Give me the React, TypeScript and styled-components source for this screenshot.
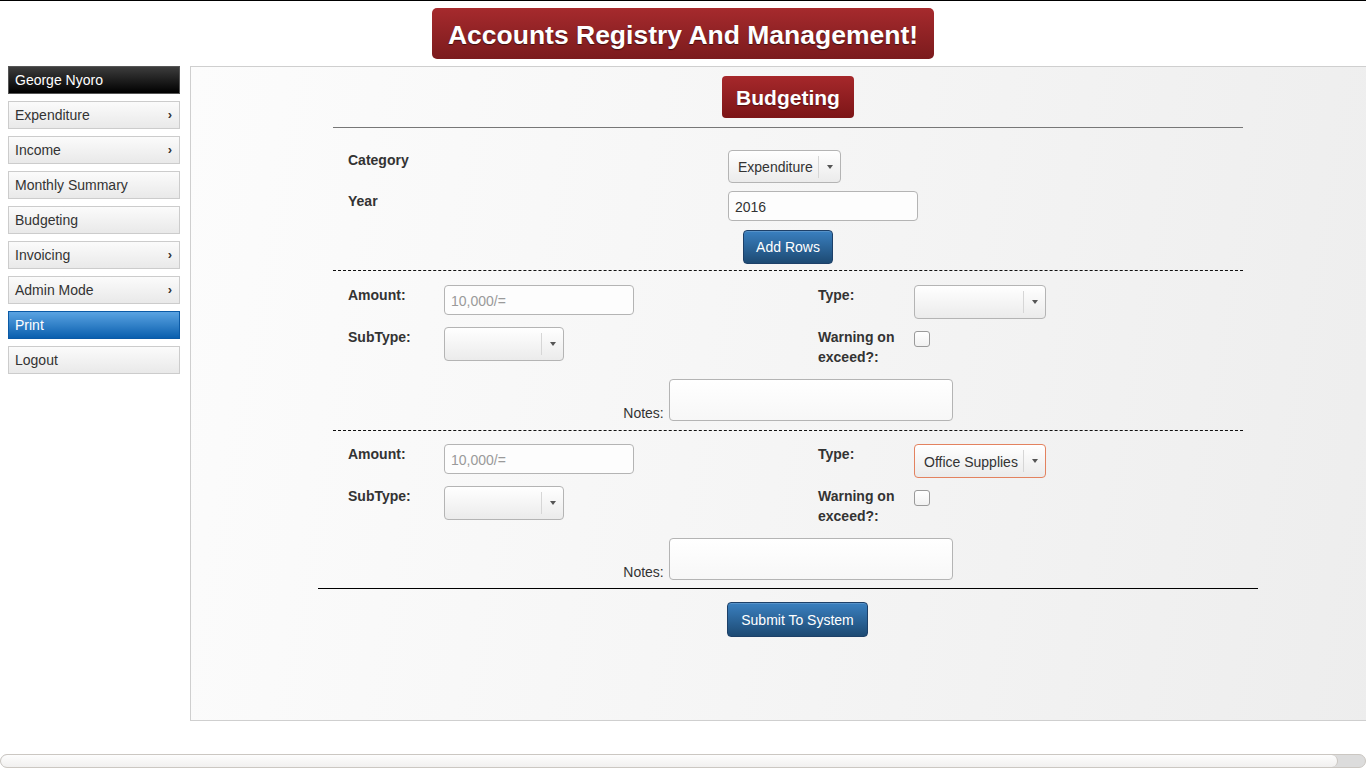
import React from "react";
import styled, { createGlobalStyle } from "styled-components";

const GlobalStyle = createGlobalStyle`
  html, body {
    margin: 0;
    padding: 0;
    overflow: hidden;
    background: #fff;
  }
  body {
    font-family: "Liberation Sans", Arial, sans-serif;
    font-size: 14px;
    color: #333;
  }
  * { box-sizing: border-box; }
`;

const Page = styled.div`
  height: 100vh;
  width: 100%;
  display: flex;
  flex-direction: column;
  border-top: 1px solid #000;
  overflow: hidden;
`;

const Header = styled.header`
  display: flex;
  justify-content: center;
  padding-top: 7px;
`;

const Title = styled.h1`
  margin: 0;
  width: 502px;
  height: 51px;
  padding-top: 3px;
  display: flex;
  align-items: center;
  justify-content: center;
  border-radius: 5px;
  background: linear-gradient(to bottom, #a62a2d 0%, #7b1b1d 100%);
  color: #fff;
  font-size: 26.5px;
  font-weight: bold;
  white-space: nowrap;
  text-shadow: 0 1px 1px rgba(0, 0, 0, 0.55);
`;

const Body = styled.div`
  display: flex;
  align-items: flex-start;
  gap: 10px;
  padding: 7px 0 0 8px;
`;

const Sidebar = styled.nav`
  width: 172px;
  flex-shrink: 0;
  display: flex;
  flex-direction: column;
  gap: 7px;
`;

const NavItem = styled.div<{ $variant?: "dark" | "active" }>`
  height: 28px;
  line-height: 26px;
  padding: 0 7px 0 6px;
  display: flex;
  justify-content: space-between;
  border: 1px solid
    ${(p) => (p.$variant === "active" ? "#0b5aa6" : p.$variant === "dark" ? "#555" : "#cccccc")};
  background: ${(p) =>
    p.$variant === "dark"
      ? "linear-gradient(to bottom, #3c3c3c 0%, #000 100%)"
      : p.$variant === "active"
      ? "linear-gradient(to bottom, #5aa3e2 0%, #0a5fae 100%)"
      : "linear-gradient(to bottom, #fbfbfb 0%, #e9e9e9 100%)"};
  color: ${(p) => (p.$variant ? "#fff" : "#333")};
  font-size: 14px;
  white-space: nowrap;
`;

const Chevron = styled.span`
  font-size: 13px;
  font-weight: bold;
  color: #333;
`;

const Panel = styled.main`
  width: 1196px;
  height: 655px;
  flex-shrink: 0;
  border: 1px solid #cfcfcf;
  background: linear-gradient(100deg, #fcfcfc 0%, #f5f5f5 50%, #ededed 100%);
  padding-top: 9px;
  display: flex;
  flex-direction: column;
  align-items: center;
`;

const Badge = styled.h2`
  margin: 0;
  width: 132px;
  height: 42px;
  padding-top: 2px;
  display: flex;
  align-items: center;
  justify-content: center;
  border-radius: 4px;
  background: linear-gradient(to bottom, #a6282b 0%, #7c1517 100%);
  color: #fff;
  font-size: 21px;
  font-weight: bold;
  text-shadow: 0 1px 1px rgba(0, 0, 0, 0.4);
`;

const Form = styled.form`
  width: 910px;
  margin-top: 9px;
`;

const Rule = styled.hr<{ $kind: "top" | "dashed" | "solid" }>`
  margin: ${(p) => (p.$kind === "solid" ? "0 -15px" : "0")};
  border: 0;
  border-top: 1px ${(p) => (p.$kind === "dashed" ? "dashed #111" : "solid")}
    ${(p) => (p.$kind === "top" ? "#777" : p.$kind === "solid" ? "#000" : "")};
  height: 0;
`;

const HeadGrid = styled.div`
  display: grid;
  grid-template-columns: 380px auto;
  row-gap: 8px;
  align-items: start;
  padding: 22px 0 0 15px;
`;

const Label = styled.label`
  font-weight: bold;
  font-size: 14px;
  line-height: 20px;
  color: #333;
`;

const CenterRow = styled.div<{ $top: number; $bottom?: number; $shift?: number }>`
  display: flex;
  justify-content: center;
  padding-top: ${(p) => p.$top}px;
  padding-bottom: ${(p) => p.$bottom ?? 0}px;
  padding-left: ${(p) => p.$shift ?? 0}px;
`;

const Button = styled.button<{ $w: number; $h: number }>`
  width: ${(p) => p.$w}px;
  height: ${(p) => p.$h}px;
  border: 1px solid #1d4068;
  border-radius: 4px;
  background: linear-gradient(to bottom, #3a80c0 0%, #1d4a73 100%);
  color: #fff;
  font-family: "Liberation Sans", Arial, sans-serif;
  font-size: 14px;
  padding: 0;
  box-shadow: inset 0 1px 0 rgba(255, 255, 255, 0.15);
`;

const TextInput = styled.input`
  width: 190px;
  height: 30px;
  border: 1px solid #b4b4b4;
  border-radius: 4px;
  background: #fdfdfd;
  padding: 2px 6px 0;
  font-family: "Liberation Sans", Arial, sans-serif;
  font-size: 14px;
  color: #333;
  &::placeholder { color: #9a9a9a; }
`;

const Select = styled.div<{ $w: number; $h: number; $focus?: boolean }>`
  width: ${(p) => p.$w}px;
  height: ${(p) => p.$h}px;
  display: flex;
  align-items: center;
  border: 1px solid ${(p) => (p.$focus ? "#e3825f" : "#b4b4b4")};
  border-radius: 4px;
  background: linear-gradient(to bottom, #ffffff 0%, #ebebeb 100%);
  font-size: 14px;
  color: #333;
`;

const SelectText = styled.span`
  flex: 1;
  padding: 1px 0 0 9px;
  white-space: nowrap;
  overflow: hidden;
`;

const CaretBox = styled.span`
  width: 22px;
  height: 22px;
  border-left: 1px solid #d6d6d6;
  display: flex;
  align-items: center;
  justify-content: center;
  &::after {
    content: "";
    border-left: 3px solid transparent;
    border-right: 3px solid transparent;
    border-top: 4px solid #555;
  }
`;

const Block = styled.section<{ $bottom: number }>`
  padding-bottom: ${(p) => p.$bottom}px;
`;

const RowGrid = styled.div<{ $top: number }>`
  display: grid;
  grid-template-columns: 96px 374px 96px auto;
  row-gap: 8px;
  align-items: start;
  padding: ${(p) => p.$top}px 0 0 15px;
`;

const Check = styled.span`
  margin-top: 4px;
  width: 16px;
  height: 16px;
  border: 1px solid #9a9a9a;
  border-radius: 3px;
  background: linear-gradient(to bottom, #fff 0%, #f1f1f1 100%);
`;

const NotesRow = styled.div`
  display: flex;
  justify-content: center;
  align-items: flex-end;
  gap: 5px;
  margin-top: 12px;
`;

const NotesLabel = styled.label`
  font-size: 14px;
  line-height: 16px;
  color: #333;
`;

const TextArea = styled.textarea`
  width: 284px;
  height: 42px;
  border: 1px solid #b4b4b4;
  border-radius: 4px;
  background: linear-gradient(to bottom, #fff 0%, #f7f7f7 100%);
  resize: none;
  display: block;
`;

const Spacer = styled.div`
  flex: 1;
`;

const ScrollTrack = styled.div`
  height: 14px;
  border: 1px solid #cbc7c2;
  border-radius: 7px;
  background: #dcdcdc;
  overflow: hidden;
  display: flex;
`;

const ScrollThumb = styled.div`
  width: 98%;
  height: 100%;
  border-right: 1px solid #cbc7c2;
  border-radius: 7px;
  background: linear-gradient(to bottom, #fdfdfd 0%, #f1f0ef 100%);
`;

const SelectBox: React.FC<{ w: number; h: number; text?: string; focus?: boolean }> = ({
  w,
  h,
  text,
  focus,
}) => (
  <Select $w={w} $h={h} $focus={focus}>
    <SelectText>{text}</SelectText>
    <CaretBox />
  </Select>
);

const BudgetRow: React.FC<{ type?: string; last?: boolean }> = ({ type, last }) => (
  <Block $bottom={last ? 8 : 9}>
    <RowGrid $top={last ? 13 : 14}>
      <Label>Amount:</Label>
      <TextInput placeholder="10,000/=" />
      <Label>Type:</Label>
      <SelectBox w={132} h={34} text={type} focus={!!type} />
      <Label>SubType:</Label>
      <SelectBox w={120} h={34} />
      <Label>
        Warning on
        <br />
        exceed?:
      </Label>
      <Check />
    </RowGrid>
    <NotesRow>
      <NotesLabel>Notes:</NotesLabel>
      <TextArea />
    </NotesRow>
  </Block>
);

const navItems: { label: string; arrow?: boolean; variant?: "dark" | "active" }[] = [
  { label: "George Nyoro", variant: "dark" },
  { label: "Expenditure", arrow: true },
  { label: "Income", arrow: true },
  { label: "Monthly Summary" },
  { label: "Budgeting" },
  { label: "Invoicing", arrow: true },
  { label: "Admin Mode", arrow: true },
  { label: "Print", variant: "active" },
  { label: "Logout" },
];

export default function App() {
  return (
    <>
      <GlobalStyle />
      <Page>
        <Header>
          <Title>Accounts Registry And Management!</Title>
        </Header>
        <Body>
          <Sidebar>
            {navItems.map((n) => (
              <NavItem key={n.label} $variant={n.variant}>
                <span>{n.label}</span>
                {n.arrow && <Chevron>›</Chevron>}
              </NavItem>
            ))}
          </Sidebar>
          <Panel>
            <Badge>Budgeting</Badge>
            <Form onSubmit={(e) => e.preventDefault()}>
              <Rule $kind="top" />
              <HeadGrid>
                <Label>Category</Label>
                <SelectBox w={113} h={33} text="Expenditure" />
                <Label>Year</Label>
                <TextInput defaultValue="2016" />
              </HeadGrid>
              <CenterRow $top={9} $bottom={6}>
                <Button type="button" $w={90} $h={34}>
                  Add Rows
                </Button>
              </CenterRow>
              <Rule $kind="dashed" />
              <BudgetRow />
              <Rule $kind="dashed" />
              <BudgetRow type="Office Supplies" last />
              <Rule $kind="solid" />
              <CenterRow $top={13} $shift={19}>
                <Button type="submit" $w={141} $h={35}>
                  Submit To System
                </Button>
              </CenterRow>
            </Form>
          </Panel>
        </Body>
        <Spacer />
        <ScrollTrack>
          <ScrollThumb />
        </ScrollTrack>
      </Page>
    </>
  );
}
